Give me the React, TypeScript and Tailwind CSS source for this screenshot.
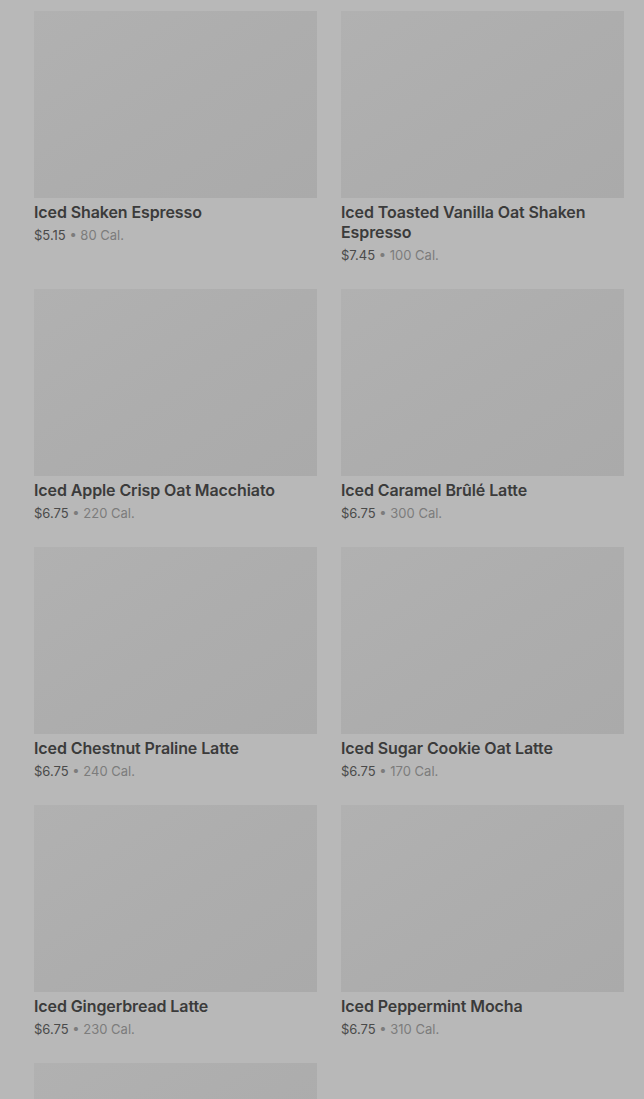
import React from 'react';

const drinks = [
    { name: "Iced Shaken Espresso", price: "$5.15", cal: "80 Cal." },
    { name: "Iced Toasted Vanilla Oat Shaken Espresso", price: "$7.45", cal: "100 Cal." },
    { name: "Iced Apple Crisp Oat Macchiato", price: "$6.75", cal: "220 Cal." },
    { name: "Iced Caramel Brûlé Latte", price: "$6.75", cal: "300 Cal." },
    { name: "Iced Chestnut Praline Latte", price: "$6.75", cal: "240 Cal." },
    { name: "Iced Sugar Cookie Oat Latte", price: "$6.75", cal: "170 Cal." },
    { name: "Iced Gingerbread Latte", price: "$6.75", cal: "230 Cal." },
    { name: "Iced Peppermint Mocha", price: "$6.75", cal: "310 Cal." },
    { name: "Iced Pumpkin Cream Chai", price: "$6.45", cal: "250 Cal." },
];

function DrinkCard({ drink }: { drink: typeof drinks[0] }) {
    return (
        <div className="flex flex-col">
            {/* image placeholder, still loading */}
            <div className="h-[187px] w-full bg-gradient-to-br from-[#b1b1b1] via-[#adadad] to-[#aaaaaa]" />
            <h3 className="mt-[4px] text-[16px] leading-[20px] font-semibold text-[#3b3b3b] tracking-[-0.1px]">
                {drink.name}
            </h3>
            <p className="mt-[3px] text-[13px] leading-[20px] text-[#4a4a4a]">
                {drink.price}
                <span className="text-[#7c7c7c]"> • {drink.cal}</span>
            </p>
        </div>
    );
}

export default function App() {
    return (
        <div className="min-h-[1099px] bg-[#b8b8b8] pt-[11px] pl-[34px] pr-[20px] overflow-hidden h-[1099px] font-['Inter',sans-serif]">
            <div className="grid grid-cols-2 gap-x-[24px] gap-y-[24px]">
                {drinks.map((drink, i) => (
                    <DrinkCard key={i} drink={drink} />
                ))}
            </div>
        </div>
    );
}
